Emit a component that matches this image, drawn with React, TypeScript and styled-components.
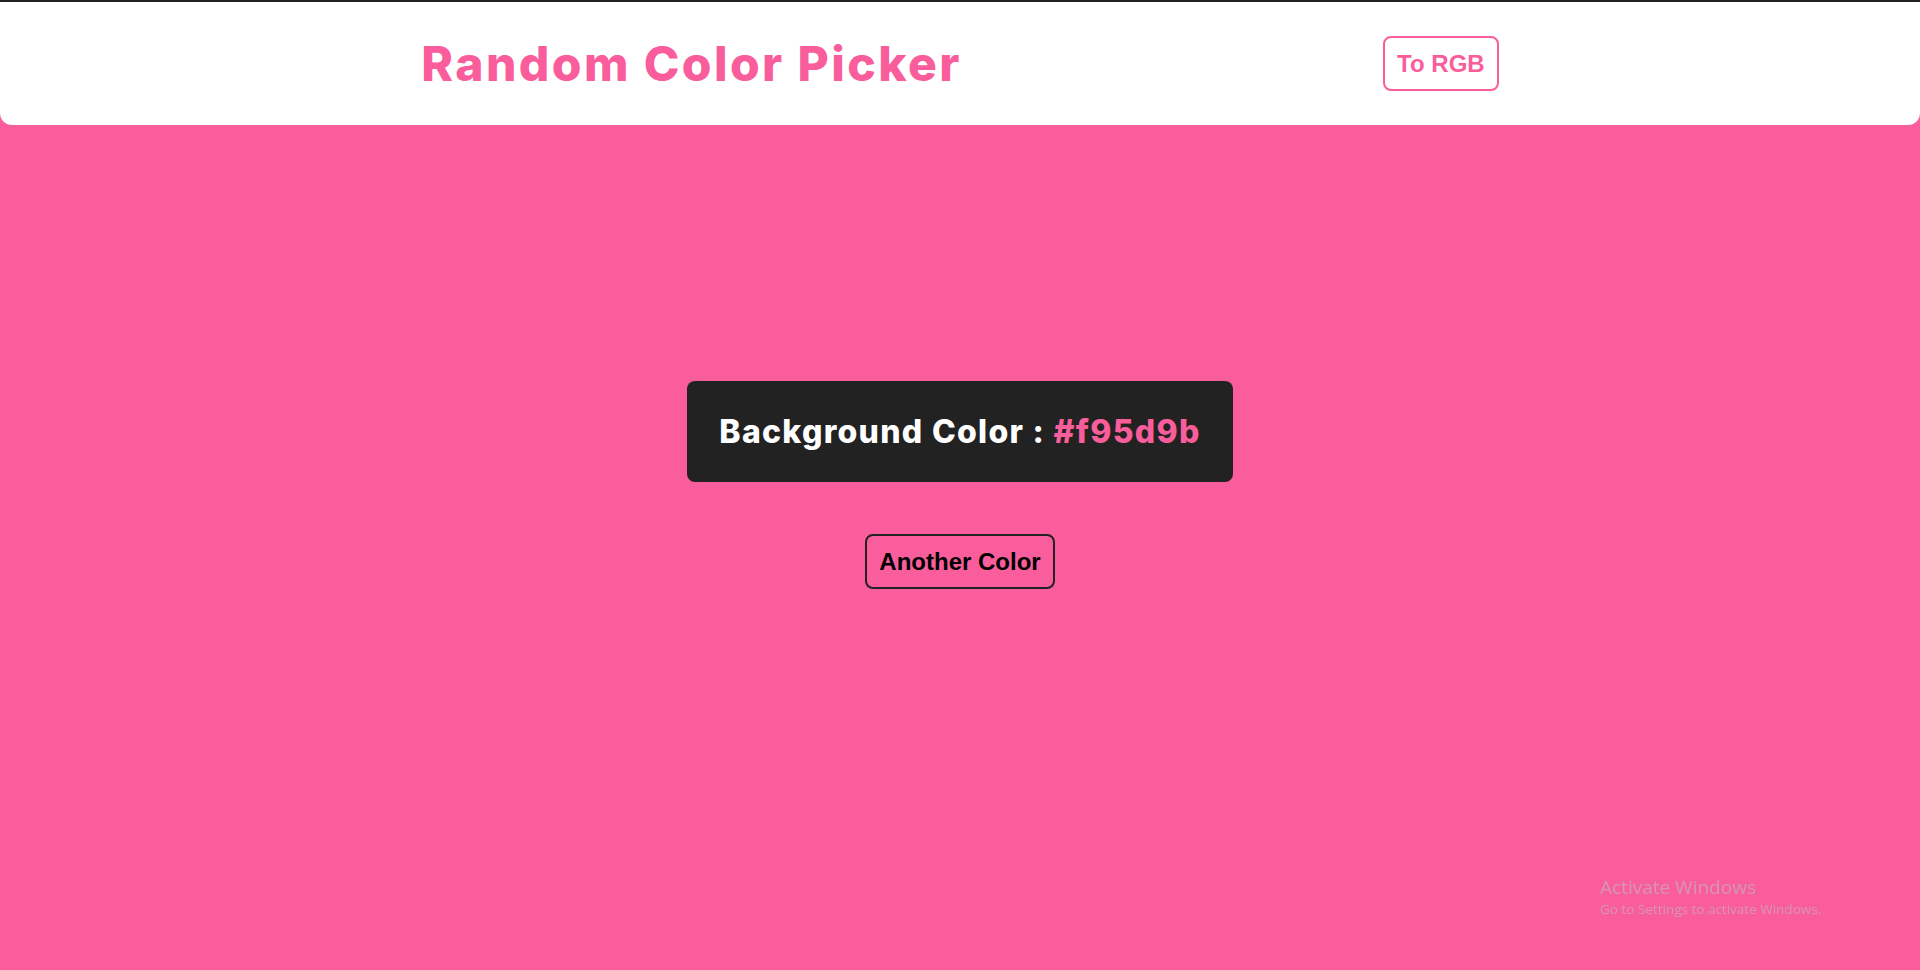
import React, { useState } from 'react';
import styled, { createGlobalStyle } from 'styled-components';

const pink = '#f95d9b';
const dark = '#222222';

const GlobalStyle = createGlobalStyle`
  * {
    box-sizing: border-box;
  }
  html, body {
    margin: 0;
    padding: 0;
  }
  body {
    font-family: 'Liberation Sans', Arial, sans-serif;
  }
`;

const Page = styled.div<{ bg: string }>`
  display: flex;
  flex-direction: column;
  min-height: 100vh;
  background: ${(p) => p.bg};
  overflow: hidden;
`;

const Header = styled.header`
  display: flex;
  align-items: center;
  justify-content: space-evenly;
  height: 125px;
  background: #fff;
  border-top: 2px solid ${dark};
  border-radius: 0 0 12px 12px;
`;

const Title = styled.h1`
  margin: 0;
  font-family: Inter, 'Noto Sans', sans-serif;
  font-weight: 800;
  font-size: 48px;
  letter-spacing: 2.4px;
  color: ${pink};
`;

const OutlineButton = styled.button<{ tone: string; ink?: string }>`
  padding: 12px;
  font-family: 'Liberation Sans', Arial, sans-serif;
  font-weight: 700;
  font-size: 24px;
  line-height: 27px;
  color: ${(p) => p.ink || p.tone};
  background: transparent;
  border: 2px solid ${(p) => p.tone};
  border-radius: 8px;
  cursor: pointer;
`;

const Main = styled.main`
  flex: 1;
  display: flex;
  flex-direction: column;
  align-items: center;
  justify-content: center;
  gap: 52px;
  padding-bottom: 125px;
`;

const ColorCard = styled.div`
  padding: 31px 32px;
  background: ${dark};
  border-radius: 8px;
  font-family: Inter, 'Noto Sans', sans-serif;
  font-weight: 800;
  font-size: 32px;
  line-height: 39px;
  letter-spacing: 1.3px;
  color: #fff;
`;

const Hex = styled.span<{ color: string }>`
  color: ${(p) => p.color};
`;

const Watermark = styled.div`
  position: fixed;
  left: 1600px;
  top: 875px;
  font-family: 'Open Sans', 'Noto Sans', sans-serif;
  color: rgba(190, 190, 190, 0.6);
  pointer-events: none;
`;

const WatermarkTitle = styled.div`
  font-size: 19px;
  line-height: 25px;
`;

const WatermarkNote = styled.div`
  font-size: 13.5px;
  line-height: 18px;
`;

const randomHex = () =>
  '#' +
  Math.floor(Math.random() * 0xffffff)
    .toString(16)
    .padStart(6, '0');

const toRgb = (hex: string) => {
  const n = parseInt(hex.slice(1), 16);
  return `rgb(${(n >> 16) & 255}, ${(n >> 8) & 255}, ${n & 255})`;
};

const App: React.FC = () => {
  const [color, setColor] = useState('#f95d9b');
  const [rgbMode, setRgbMode] = useState(false);

  const label = rgbMode ? toRgb(color) : color;

  return (
    <Page bg={color}>
      <GlobalStyle />
      <Header>
        <Title style={{ color }}>Random Color Picker</Title>
        <OutlineButton tone={color} onClick={() => setRgbMode(!rgbMode)}>
          {rgbMode ? 'To HEX' : 'To RGB'}
        </OutlineButton>
      </Header>
      <Main>
        <ColorCard>
          Background Color : <Hex color={color}>{label}</Hex>
        </ColorCard>
        <OutlineButton tone={dark} ink="#000" onClick={() => setColor(randomHex())}>
          Another Color
        </OutlineButton>
      </Main>
      <Watermark>
        <WatermarkTitle>Activate Windows</WatermarkTitle>
        <WatermarkNote>Go to Settings to activate Windows.</WatermarkNote>
      </Watermark>
    </Page>
  );
};

export default App;
